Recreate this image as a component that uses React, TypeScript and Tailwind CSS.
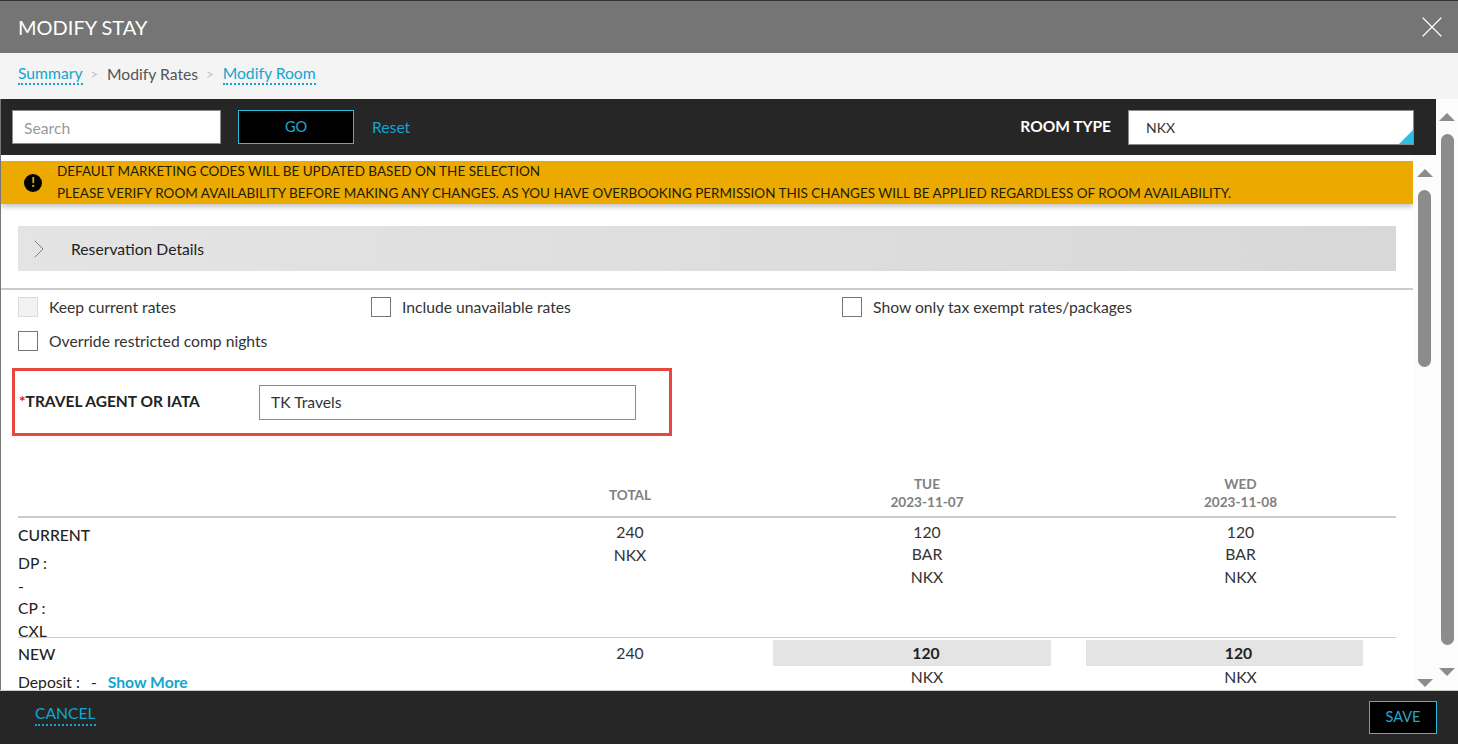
import { X, ChevronRight } from 'lucide-react'

type ScrollProps = {
  width: string
  topGap: string
  thumb: string
  bottomGap: string
}

function Scroller({ width, topGap, thumb, bottomGap }: ScrollProps) {
  return (
    <div className={`flex shrink-0 flex-col items-center bg-[#fcfcfc] ${width}`}>
      <div className={topGap} />
      <div className="h-0 w-0 border-x-[8px] border-b-[8px] border-x-transparent border-b-[#8c8c8c]" />
      <div className={`mt-[13px] w-[13px] rounded-full bg-[#8c8c8c] ${thumb}`} />
      <div className={bottomGap} />
      <div className="h-0 w-0 border-x-[8px] border-t-[8px] border-x-transparent border-t-[#8c8c8c]" />
    </div>
  )
}

function Check({ label, muted, className }: { label: string; muted?: boolean; className?: string }) {
  return (
    <label className={`flex items-center gap-[11px] ${className ?? ''}`}>
      <span className={`h-5 w-5 border ${muted ? 'border-[#dcdcdc] bg-[#f2f2f2]' : 'border-[#767676] bg-white'}`} />
      <span className="text-[15.7px] leading-5 text-[#333]">{label}</span>
    </label>
  )
}

function DayHead({ day, date, className }: { day: string; date: string; className: string }) {
  return (
    <div className={`text-center text-[13.6px] leading-[18px] font-bold text-[#808080] ${className}`}>
      <div>{day}</div>
      <div>{date}</div>
    </div>
  )
}

export default function App() {
  return (
    <div className="flex h-[744px] w-[1458px] flex-col overflow-hidden bg-white font-['Lato',sans-serif] text-[15.7px] text-[#222]">
      <header className="flex h-[53px] shrink-0 items-center justify-between border-t border-[#333] bg-[#757575] pr-[8px] pl-[18px]">
        <h1 className="text-[20px] font-normal text-white">MODIFY STAY</h1>
        <X className="h-9 w-9 text-white" strokeWidth={0.8} />
      </header>

      <nav className="flex h-[46px] shrink-0 items-center bg-[#f4f4f4] pb-[3px] pl-[18px]">
        <a className="border-b-2 border-dotted border-[#12a5d1] pb-[1px] leading-[18px] text-[#12a5d1]">Summary</a>
        <span className="mr-[9px] ml-[8px] text-[13px] text-[#bbb]">&gt;</span>
        <span className="text-[#555]">Modify Rates</span>
        <span className="mr-[9px] ml-[8px] text-[13px] text-[#bbb]">&gt;</span>
        <a className="border-b-2 border-dotted border-[#12a5d1] pb-[1px] leading-[18px] text-[#12a5d1]">Modify Room</a>
      </nav>

      <div className="flex h-[591px] shrink-0">
        <div className="flex w-[1436px] flex-col border-l border-[#767676]">
          <div className="flex h-[56px] shrink-0 items-center bg-[#262626] pr-[22px] pl-[11px]">
            <div className="flex h-[34px] w-[209px] items-center border border-[#8a8a8a] bg-white pt-[3px] pl-[11px] text-[#999]">Search</div>
            <button className="ml-[17px] h-[34px] w-[116px] border border-[#25bde0] bg-black text-[14.5px] text-[#25a8cf]">GO</button>
            <a className="ml-[18px] pt-[1px] text-[#12a5d1]">Reset</a>
            <span className="mr-[17px] ml-auto text-[15.5px] font-bold text-white">ROOM TYPE</span>
            <div className="relative flex h-[35px] w-[286px] items-center border border-[#8a8a8a] bg-white pl-[17px] text-[14px] text-[#333]">
              NKX
              <span className="absolute right-0 bottom-0 h-0 w-0 border-b-[14px] border-l-[14px] border-b-[#2bbfe6] border-l-transparent" />
            </div>
          </div>

          <div className="flex min-h-0 flex-1">
            <div className="min-w-0 flex-1 overflow-hidden pt-[6px]">
              <div className="flex h-[43px] items-center bg-[#ecaa00] shadow-[0_3px_5px_rgba(0,0,0,0.22)]">
                <span className="mr-[15px] ml-[23px] flex h-[18px] w-[18px] shrink-0 items-center justify-center rounded-full bg-black text-[13px] leading-none font-black text-[#ecaa00]">!</span>
                <div className="pb-[2px] text-[13.5px] leading-[22px] text-[#1c1c00]">
                  <div>DEFAULT MARKETING CODES WILL BE UPDATED BASED ON THE SELECTION</div>
                  <div>PLEASE VERIFY ROOM AVAILABILITY BEFORE MAKING ANY CHANGES. AS YOU HAVE OVERBOOKING PERMISSION THIS CHANGES WILL BE APPLIED REGARDLESS OF ROOM AVAILABILITY.</div>
                </div>
              </div>

              <div className="mx-[17px] mt-[22px] flex h-[45px] items-center bg-gradient-to-r from-[#e4e4e4] to-[#d8d8d8]">
                <ChevronRight className="ml-[5px] h-8 w-8 text-[#777]" strokeWidth={0.7} />
                <span className="ml-[16px] pt-[3px] text-[#222]">Reservation Details</span>
              </div>

              <div className="mt-[17px] border-t-2 border-[#ccc]" />

              <div className="mt-[7px] flex pl-[17px]">
                <Check label="Keep current rates" muted className="w-[353px]" />
                <Check label="Include unavailable rates" className="w-[471px]" />
                <Check label="Show only tax exempt rates/packages" />
              </div>
              <Check label="Override restricted comp nights" className="mt-[14px] ml-[17px]" />

              <div className="mt-[17px] ml-[11px] flex h-[68px] w-[660px] items-center border-[3px] border-[#e8473f]">
                <span className="w-[244px] pl-[4px] text-[15.5px] font-bold text-[#222]">
                  <span className="text-[#e11]">*</span>TRAVEL AGENT OR IATA
                </span>
                <div className="flex h-[35px] w-[377px] items-center border border-[#8a8a8a] pt-[2px] pl-[11px] text-[#333]">TK Travels</div>
              </div>

              <div className="mx-[17px] mt-[39px]">
                <div className="grid h-[43px] grid-cols-[537px_150px_346px_345px] border-b-2 border-[#ccc]">
                  <div />
                  <div className="pt-[11px] text-center text-[13.6px] leading-[18px] font-bold text-[#808080]">TOTAL</div>
                  <DayHead day="TUE" date="2023-11-07" className="pl-[98px]" />
                  <DayHead day="WED" date="2023-11-08" className="pl-[34px]" />
                </div>

                <div className="grid h-[120px] grid-cols-[537px_150px_346px_345px] border-b border-[#ccc] leading-[22px]">
                  <div className="pt-[6px]">
                    <div className="font-medium">CURRENT</div>
                    <div className="mt-[6px]">DP :</div>
                    <div className="mt-[1px]">-</div>
                    <div>CP :</div>
                    <div className="mt-[1px] h-[20px]">CXL</div>
                  </div>
                  <div className="pt-[3px] text-center text-[#333]">
                    <div>240</div>
                    <div className="mt-[1px]">NKX</div>
                  </div>
                  <div className="pt-[3px] pl-[98px] text-center text-[#333]">
                    <div>120</div>
                    <div>BAR</div>
                    <div className="mt-[1px]">NKX</div>
                  </div>
                  <div className="pt-[3px] pl-[34px] text-center text-[#333]">
                    <div>120</div>
                    <div>BAR</div>
                    <div className="mt-[1px]">NKX</div>
                  </div>
                </div>

                <div className="grid h-[52px] grid-cols-[537px_150px_346px_345px] overflow-hidden leading-[22px]">
                  <div className="pt-[5px]">
                    <div className="font-medium">NEW</div>
                    <div className="mt-[6px]">
                      Deposit :<span className="ml-[11px]">-</span>
                      <a className="ml-[11px] font-bold text-[#12a5d1]">Show More</a>
                    </div>
                  </div>
                  <div className="pt-[4px] text-center text-[#333]">240</div>
                  <div className="pt-[2px] text-center text-[#333]">
                    <div className="ml-[68px] h-[26px] bg-[#e4e4e4] pl-[28px] leading-[26px] font-bold text-[#222]">120</div>
                    <div className="pl-[98px]">NKX</div>
                  </div>
                  <div className="pt-[2px] text-center text-[#333]">
                    <div className="mr-[33px] ml-[35px] h-[26px] bg-[#e4e4e4] pl-[28px] leading-[26px] font-bold text-[#222]">120</div>
                    <div className="pl-[34px]">NKX</div>
                  </div>
                </div>
              </div>
            </div>
            <Scroller width="w-[23px]" topGap="h-[14px]" thumb="h-[177px]" bottomGap="h-[312px]" />
          </div>
        </div>
        <Scroller width="w-[22px]" topGap="h-[14px]" thumb="h-[511px]" bottomGap="h-[23px]" />
      </div>

      <footer className="flex h-[54px] shrink-0 items-center justify-between border-t border-[#ccc] bg-[#262626] pr-[21px] pl-[35px]">
        <a className="mb-[6px] border-b-2 border-dotted border-[#12a5d1] pb-[1px] leading-[20px] text-[#12a5d1]">CANCEL</a>
        <button className="mb-[1px] h-[33px] w-[68px] border border-[#25bde0] bg-black text-[14.5px] text-[#25a8cf]">SAVE</button>
      </footer>
    </div>
  )
}
